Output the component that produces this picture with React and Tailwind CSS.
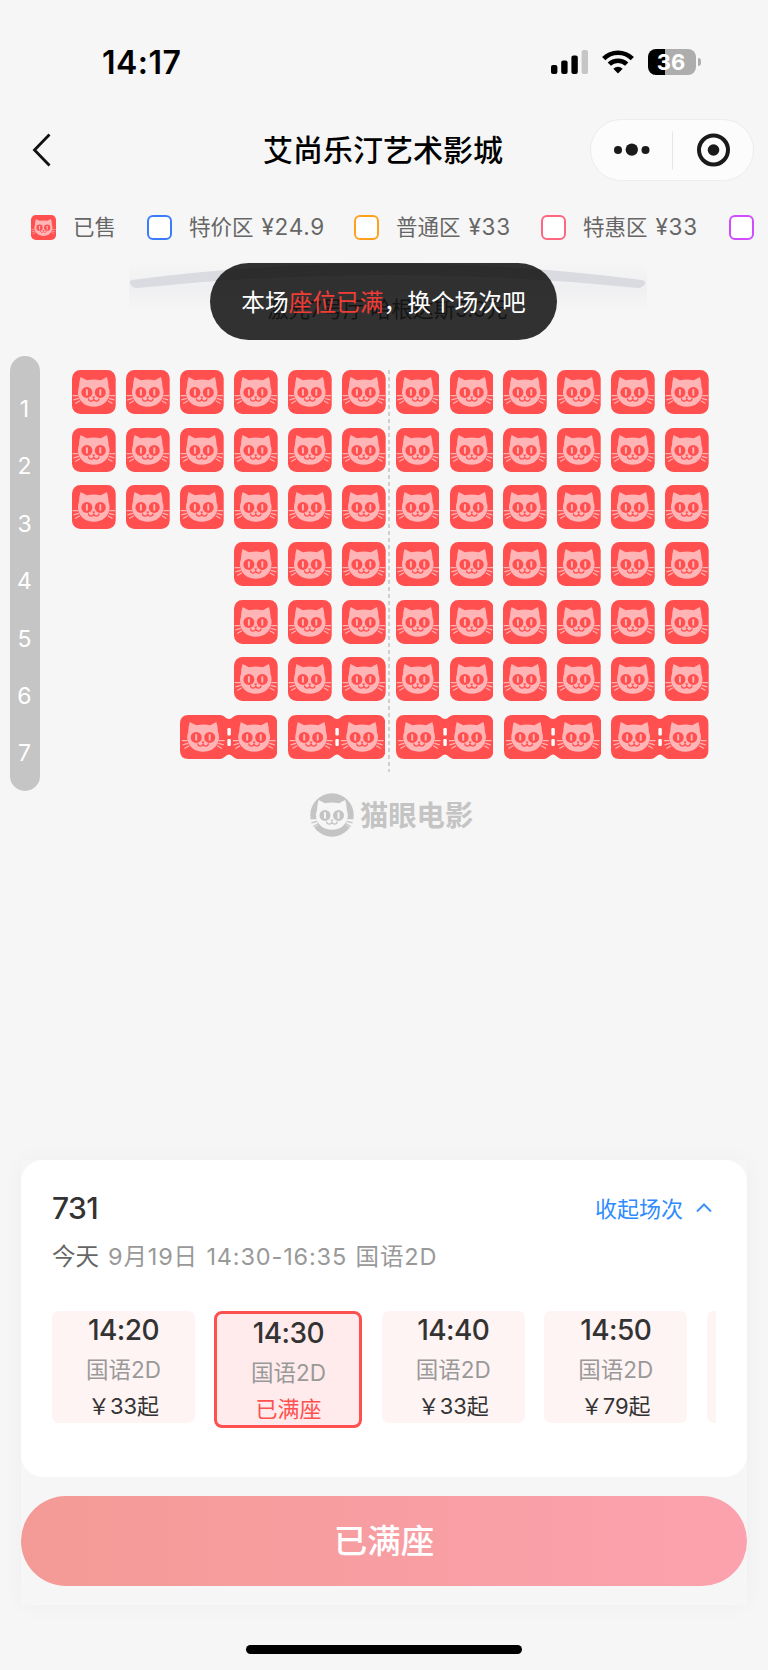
const legend = [
  { label: '特价区', price: '¥24.9', border: 'border-[#3b7cff]', w: 'w-[207px]' },
  { label: '普通区', price: '¥33', border: 'border-[#ffa11f]', w: 'w-[187px]' },
  { label: '特惠区', price: '¥33', border: 'border-[#ff6680]', w: 'w-[188px]' },
  { label: '', price: '', border: 'border-[#cf4dff]', w: 'w-[25px]' },
]

// number of empty places before the first seat of each row
const rows = [0, 0, 0, 3, 3, 3]

const sessions = [
  { time: '14:20', kind: '国语2D', price: '￥33起' },
  { time: '14:30', kind: '国语2D', price: '已满座', active: true },
  { time: '14:40', kind: '国语2D', price: '￥33起' },
  { time: '14:50', kind: '国语2D', price: '￥79起' },
]

const CatFace = ({ face, hole }) => (
  <>
    <path fill={face} d="M8.6 7 L15 10.2 Q22 8.8 29 10.2 L35.2 7 Q36.6 11.5 36.8 17 Q38 20 37.8 23 C37.3 31.5 30.5 36.8 22 36.8 C13.5 36.8 6.5 31.5 6 23 Q5.9 20 7 17 Q7.2 11.5 8.6 7Z" />
    <circle cx="15" cy="22.4" r="5.5" fill={hole} />
    <circle cx="28.5" cy="22.4" r="5.5" fill={hole} />
    <rect x="14" y="19" width="2" height="6.8" rx="1" fill={face} />
    <rect x="27.5" y="19" width="2" height="6.8" rx="1" fill={face} />
    <path d="M20.3 26.6h3.2L21.9 29z" fill={hole} />
    <path d="M16.6 28.8c.4 3 4.8 3 5.3 0c.5 3 4.9 3 5.3 0" fill="none" stroke={hole} strokeWidth="1.2" strokeLinecap="round" />
  </>
)

const Whiskers = ({ color }) => (
  <path d="M.6 25.6h5.8M1.4 29.8l5.6-1.4M3.2 33.6l4.8-2.8M43.4 25.6h-5.8M42.6 29.8l-5.6-1.4M40.8 33.6l-4.8-2.8" stroke={color} strokeWidth="1.2" fill="none" />
)

const Seat = ({ className = 'w-[43.7px] h-[44px]' }) => (
  <svg viewBox="0 0 44 44" className={className} preserveAspectRatio="none">
    <rect width="44" height="44" rx="8.5" fill="#ff4f4f" />
    <Whiskers color="#ffb4b6" />
    <CatFace face="#ffb4b6" hole="#ff4f4f" />
  </svg>
)

const CoupleSeat = () => (
  <svg viewBox="0 0 97.4 44" className="w-[97.4px] h-[44px]">
    <path fill="#ff4f4f" d="M8.5 0H40C44 0 46 4 49 4S54 0 58 0H89Q97.4 0 97.4 8.5V35.5Q97.4 44 89 44H58C54 44 52 39.5 49 39.5S44 44 40 44H8.5Q0 44 0 35.5V8.5Q0 0 8.5 0Z" />
    <rect x="47.4" y="13" width="3.4" height="7.5" rx="1.2" fill="#fff" />
    <rect x="47.4" y="24" width="3.4" height="7" rx="1.2" fill="#fff" />
    <g transform="translate(1.2 0)">
      <Whiskers color="#ffb4b6" />
      <CatFace face="#ffb4b6" hole="#ff4f4f" />
    </g>
    <g transform="translate(52.2 0)">
      <Whiskers color="#ffb4b6" />
      <CatFace face="#ffb4b6" hole="#ff4f4f" />
    </g>
  </svg>
)

const StatusBar = () => (
  <div className="flex h-[112px] pt-[12px] items-center justify-between pl-[102px] pr-[67px]">
    <div className="pt-[1px] text-[32px] leading-none font-semibold text-black tracking-[0.5px]">14:17</div>
    <div className="flex items-center">
      <svg viewBox="0 0 37 24" className="w-[37px] h-[24px]">
        <rect x="0" y="15" width="6.4" height="9" rx="2" />
        <rect x="10.2" y="10.5" width="6.4" height="13.5" rx="2" />
        <rect x="20.4" y="5.5" width="6.4" height="18.5" rx="2" />
        <rect x="30.6" y="0" width="6.4" height="24" rx="2" fill="#c6c6c6" />
      </svg>
      <svg viewBox="0 0 32 24" className="w-[32px] h-[24px] ml-[14px]" fill="none" stroke="#000" strokeWidth="4.6">
        <path d="M1.7 8.7C9.5 .8 22.5 .8 30.3 8.7" />
        <path d="M7.3 14.2C12 9.5 20 9.5 24.7 14.2" />
        <path d="M11.3 18.8Q16 14.6 20.7 18.8L16 23.6Z" fill="#000" stroke="none" />
      </svg>
      <div className="ml-[14px] w-[48px] h-[26px] rounded-[8px] bg-[linear-gradient(90deg,#000_36%,#adadad_36%)] text-white text-[22px] font-bold text-center leading-[26px]"><span className="mr-[2px]">36</span></div>
      <div className="ml-[2px] w-[3px] h-[8px] rounded-r-full bg-[#adadad]" />
    </div>
  </div>
)

const Header = () => (
  <div className="grid grid-cols-[1fr_auto_1fr] items-center h-[75px] px-[14px]">
    <svg viewBox="0 0 20 34" className="w-[20px] h-[34px] ml-[18px]" fill="none" stroke="#111" strokeWidth="2.8">
      <path d="M17.5 1.5L2.5 17L17.5 32.5" />
    </svg>
    <h1 className="pr-[2px] text-[30px] leading-none font-medium text-black">艾尚乐汀艺术影城</h1>
    <div className="justify-self-end flex items-center w-[164px] h-[62px] rounded-full border border-[#ededed] bg-[#fcfcfc]">
      <svg viewBox="0 0 162 60" className="w-[162px] h-[60px]" fill="#1a1a1a">
        <circle cx="27" cy="30" r="4" />
        <circle cx="40.8" cy="29.6" r="6.2" />
        <circle cx="54.5" cy="30" r="4" />
        <path d="M81.5 11.5v38" stroke="#e6e6e6" />
        <circle cx="122.5" cy="30" r="14.5" fill="none" stroke="#1a1a1a" strokeWidth="4" />
        <circle cx="122.5" cy="30" r="5.8" />
      </svg>
    </div>
  </div>
)

const Legend = () => (
  <div className="flex items-center h-[80px] pl-[31px] text-[21.5px] text-[#666] whitespace-nowrap overflow-hidden">
    <div className="flex items-center w-[116px] shrink-0">
      <Seat className="w-[25px] h-[25px] mr-[17px]" />
      已售
    </div>
    {legend.map((item) => (
      <div key={item.border} className={`flex items-center shrink-0 ${item.w}`}>
        <span className={`w-[25px] h-[25px] rounded-[6px] border-2 bg-white mr-[17px] shrink-0 ${item.border}`} />
        {item.label}
        <span className="ml-[8px] text-[22.5px] tracking-[0.7px]">{item.price}</span>
      </div>
    ))}
  </div>
)

const Screen = () => (
  <div className="relative h-[103px]">
    <svg viewBox="0 0 518 76" className="absolute left-[129px] top-[-5px] w-[518px] h-[76px]">
      <defs>
        <linearGradient id="glow" x1="0" y1="0" x2="0" y2="1">
          <stop offset="0" stopColor="#e6e7eb" stopOpacity="0" />
          <stop offset=".35" stopColor="#e6e7eb" stopOpacity=".45" />
          <stop offset=".8" stopColor="#f5f5f5" stopOpacity="0" />
        </linearGradient>
      </defs>
      <rect width="518" height="76" fill="url(#glow)" />
      <path d="M3 18Q258 -15 513 18Q517 19 516 22Q513 26 509 26Q258 0 8 26Q4 26 1 22Q0 19 3 18Z" fill="#dadbe0" />
    </svg>
    <div className="absolute left-0 right-0 top-[31px] pl-[7px] text-center text-[21.2px] leading-[22px] text-[#666]">激光7号厅 哈根达斯5.0元</div>
    <div className="absolute left-[210px] top-[-4px] w-[347px] h-[77px] rounded-full bg-black/80 text-white text-[23.7px] leading-[80px] text-center whitespace-nowrap">
      本场<span className="text-[#f23c36]">座位已满</span>，换个场次吧
    </div>
  </div>
)

const SeatMap = () => (
  <div className="flex h-[435px] mt-[-14px] pl-[10px]">
    <div className="w-[30px] h-[435px] rounded-full bg-[#c5c5c5] pt-[25px] pr-[1px] text-white text-[23px] text-center">
      {[1, 2, 3, 4, 5, 6, 7].map((n) => (
        <div key={n} className="h-[57.4px] leading-[57.4px]">{n}</div>
      ))}
    </div>
    <div className="relative ml-[32px] mt-[14.2px] w-[636.8px]">
      {rows.map((skip, i) => (
        <div key={i} className="flex justify-end gap-[10.2px] h-[57.4px]">
          {Array.from({ length: 12 - skip }, (_, n) => <Seat key={n} />)}
        </div>
      ))}
      <div className="flex justify-end gap-[10.5px]">
        {[1, 2, 3, 4, 5].map((n) => <CoupleSeat key={n} />)}
      </div>
      <div className="absolute left-[316px] top-0 w-[2px] h-[402px] bg-[repeating-linear-gradient(180deg,#cfcfcf_0_4px,transparent_4px_7px)]" />
    </div>
  </div>
)

const Brand = () => (
  <div className="flex items-center mt-[1px] h-[46px] pl-[310px]">
    <svg viewBox="0 0 44 44" className="w-[44px] h-[44px]">
      <circle cx="22" cy="22" r="21.7" fill="#c4c4c4" />
      <path d="M0 26h7l1 6-5 3zM44 26h-7l-1 6 5 3z" fill="#f6f6f6" />
      <Whiskers color="#c4c4c4" />
      <CatFace face="#f6f6f6" hole="#c4c4c4" />
    </svg>
    <span className="ml-[6px] mt-[2px] text-[28.3px] leading-none font-bold text-[#c4c4c4]">猫眼电影</span>
  </div>
)

const Session = ({ time, kind, price, active }) => (
  <div
    className={
      active
        ? 'shrink-0 w-[148px] h-[117px] rounded-[8px] border-[3px] border-[#ff5050] bg-[#ffebec] text-center'
        : 'shrink-0 w-[143px] h-[112px] rounded-[7px] bg-[#fff4f4] text-center'
    }
  >
    <div className="text-[28px] leading-[38px] font-medium tracking-[-0.6px] text-[#333]">{time}</div>
    <div className="text-[22.5px] leading-[42px] text-[#999]">{kind}</div>
    <div className={`text-[22px] leading-[30px] ${active ? 'text-[#ff5050]' : 'text-[#333]'}`}>{price}</div>
  </div>
)

const Sheet = () => (
  <div className="mx-[21px] mt-[322px] h-[445px] shadow-[0_0_22px_rgba(0,0,0,0.035)]">
    <div className="h-[317px] rounded-[22px] bg-white pl-[31px] pr-[31px] pt-[30px]">
      <div className="flex items-center justify-between h-[36px]">
        <h2 className="text-[30px] leading-none font-medium tracking-[-0.6px] text-[#333]">731</h2>
        <div className="flex items-center pt-[2px] text-[22px] leading-none text-[#2e8bff]">
          收起场次
          <svg viewBox="0 0 16 10" className="w-[16px] h-[10px] ml-[13px] mr-[4px] mb-[2px]" fill="none" stroke="#3c93ff" strokeWidth="2">
            <path d="M1 8.5L8 1.5L15 8.5" />
          </svg>
        </div>
      </div>
      <div className="mt-[14px] h-[34px] leading-[34px] text-[23.5px] text-[#999] tracking-[0.85px] [word-spacing:1px] whitespace-nowrap">
        <span className="text-[#666] mr-[9px] tracking-normal">今天</span>
        9月19日 14:30-16:35 国语2D
      </div>
      <div className="mt-[37px] w-[664px] flex gap-[19.4px] overflow-hidden">
        {sessions.map((s) => <Session key={s.time} {...s} />)}
        <div className="shrink-0 w-[143px] h-[112px] rounded-[7px] bg-[#fff4f4]" />
      </div>
    </div>
    <button className="mt-[19px] block w-full h-[90px] rounded-full bg-gradient-to-r from-[#f49a96] to-[#fba2ae] text-white text-[33.5px] font-medium leading-[90px]">已满座</button>
  </div>
)

const App = () => {
  return (
    <div className="w-[768px] h-[1670px] overflow-hidden bg-[#f6f6f6] font-['Inter','Noto_Sans_CJK_SC',sans-serif]">
      <StatusBar />
      <Header />
      <Legend />
      <Screen />
      <SeatMap />
      <Brand />
      <Sheet />
      <div className="mx-auto mt-[40px] w-[276px] h-[9px] rounded-full bg-black" />
    </div>
  )
}

export default App
